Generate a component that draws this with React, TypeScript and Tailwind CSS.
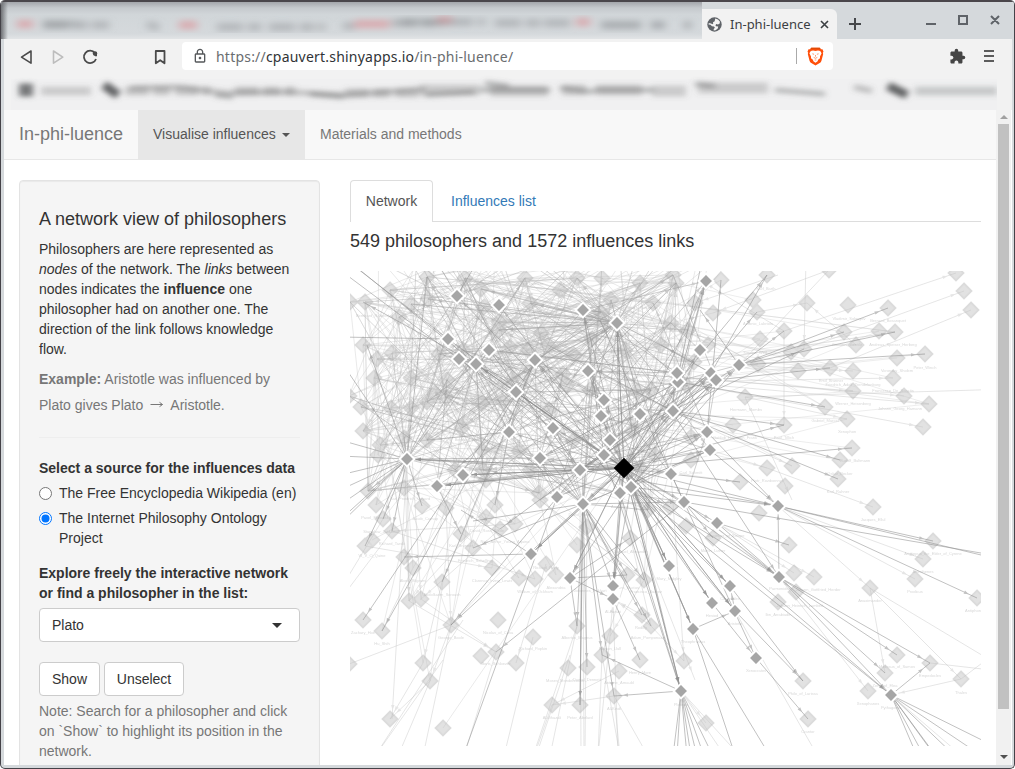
import type { ReactNode } from "react";
import { MdExtension, MdOutlineLock } from "react-icons/md";

type Pt = [number, number];
type Link = [number, number, number, number];

const PLATO: Pt = [624, 468];

const STRONG: Pt[] = [
  [457, 296], [499, 305], [448, 339], [459, 359], [489, 350], [476, 364], [516, 392], [535, 360],
  [583, 310], [617, 323], [706, 281], [588, 371], [700, 350], [678, 382], [677, 373], [711, 373],
  [716, 380], [739, 365], [604, 400], [601, 416], [640, 414], [673, 411], [553, 428], [509, 432],
  [610, 440], [604, 455], [707, 432], [710, 450], [407, 459], [540, 458], [580, 470], [671, 474],
  [463, 475], [437, 486], [557, 497], [583, 504], [620, 493], [631, 487], [684, 502], [717, 523],
  [778, 506], [531, 554], [570, 578], [613, 586], [613, 599], [669, 566], [779, 577], [730, 586],
  [712, 603], [735, 611], [693, 629], [756, 658], [681, 691], [891, 695],
];

const SPARSE: Pt[] = [
  [721, 280], [767, 275], [829, 270], [956, 273], [964, 291], [971, 310], [753, 300], [757, 312],
  [713, 313], [807, 303], [848, 305], [888, 308], [695, 303], [760, 339], [784, 331], [844, 332],
  [879, 331], [895, 332], [856, 345], [708, 345], [791, 352], [804, 349], [758, 364], [897, 358],
  [925, 354], [798, 371], [830, 368], [853, 371], [893, 378], [853, 391], [904, 396], [929, 404],
  [745, 397], [825, 407], [847, 419], [923, 427], [733, 425], [784, 425], [691, 437], [852, 448],
  [840, 460], [838, 479], [691, 460], [767, 468], [792, 466], [740, 482], [785, 486], [873, 507],
  [759, 513], [933, 541], [923, 559], [915, 579], [789, 545], [686, 526], [713, 538], [794, 573],
  [814, 577], [796, 592], [778, 602], [870, 588], [977, 598], [897, 655], [930, 663], [885, 673],
  [868, 691], [961, 679], [684, 661], [803, 681], [808, 719], [706, 723], [376, 505], [422, 506],
  [446, 508], [383, 519], [392, 531], [372, 540], [365, 546], [404, 557], [413, 568], [442, 582],
  [409, 601], [421, 599], [363, 620], [382, 631], [451, 625], [349, 664], [423, 663], [430, 681],
  [390, 719], [443, 728], [495, 505], [486, 517], [500, 529], [515, 524], [461, 534], [473, 548],
  [492, 568], [519, 578], [535, 579], [546, 564], [556, 575], [587, 527], [577, 545], [630, 538],
  [627, 575], [644, 580], [498, 620], [533, 637], [481, 656], [496, 652], [516, 663], [577, 626],
  [642, 615], [651, 626], [610, 636], [602, 655], [568, 668], [587, 667], [619, 671], [640, 660],
  [552, 705], [580, 705], [614, 696], [670, 507],
];

const DENSE: Pt[] = [
  [390, 290], [365, 302], [350, 302], [411, 304], [427, 277], [465, 278], [481, 289], [484, 307],
  [399, 317], [428, 299], [363, 345], [392, 353], [377, 359], [374, 378], [411, 378], [361, 407],
  [391, 408], [363, 431], [380, 445], [378, 455], [404, 438], [427, 440], [462, 428], [482, 403],
  [427, 402], [455, 470], [483, 470], [447, 380], [439, 354], [463, 350], [499, 330], [510, 347],
  [503, 402], [530, 303], [525, 278], [560, 290], [577, 278], [602, 278], [611, 300], [640, 283],
  [673, 275], [676, 283], [601, 312], [528, 350], [541, 333], [563, 374], [637, 392], [567, 385],
  [640, 468], [349, 396], [411, 408], [435, 393], [446, 397], [499, 322], [513, 378], [548, 345],
  [549, 410], [519, 451], [530, 470], [482, 450], [404, 488], [368, 491], [661, 345], [653, 303],
  [632, 431], [573, 441], [687, 386], [694, 362], [651, 390], [592, 339], [671, 323], [648, 510],
  [539, 493], [574, 355], [486, 480], [625, 350], [590, 390], [688, 330], [540, 500], [655, 455],
];

const ALL: Pt[] = [...SPARSE, ...DENSE];

const LABELS: [number, number, string][] = [
  [766, 290, "Karl_Barth"], [849, 320, "Vladimir_Solovyov"], [888, 322, "Bernard_Bosanquet"],
  [758, 325, "Antonio_Labriola"], [893, 346, "Andreas_Speiser_Herberg"], [847, 346, "Giovanni_Gentile"],
  [925, 369, "Peter_Winch"], [897, 372, "Voronsky_Sholem"], [831, 382, "Emil_Brunner"],
  [853, 386, "Friedrich_Adolf_Trendelenburg"], [893, 392, "Francesco_De_Sanctis"],
  [853, 405, "Werner_Heisenberg"], [900, 410, "Johann_Georg_Hamann"], [825, 422, "Gabriel_Marcel"],
  [847, 433, "Xenophon"], [784, 439, "Paul_Tillich"], [735, 439, "Gottlob_Hermann_Frank"],
  [746, 411, "Hermann_Mombs"], [855, 462, "Rudolf_Bultmann"], [840, 475, "Oskar_Becker"],
  [838, 493, "Karl_Rahner"], [767, 482, "Piotr_Rozdvennyi"], [691, 474, "Carl_Schmitt"],
  [873, 521, "Jacques_Ellul"], [933, 555, "Aristippus_the_Elder_of_Cyrene"], [923, 573, "Antisthenes"],
  [915, 593, "Prodicus"], [870, 602, "Anaximander"], [973, 612, "Antiphon"], [897, 668, "Melissus_of_Samos"],
  [930, 677, "Empedocles"], [885, 687, "Zeno_of_Elea"], [868, 705, "Xenophanes"], [891, 709, "Pythagoras"],
  [961, 694, "Thales"], [803, 695, "Philo_of_Larissa"], [808, 733, "Crantor"], [756, 672, "Xenocrates"],
  [693, 643, "Theophrastus"], [735, 625, "Aristotle"], [712, 617, "Hesiod"], [730, 600, "Carneades"],
  [778, 616, "Ibn_Arrabiade"], [780, 590, "Parmenides"], [818, 591, "Johann_Gottfried_Herder"],
  [800, 607, "Johann_Heinrich_Lambert"], [713, 552, "Martin_Luther"], [726, 537, "Diogenes_of_Sinope"],
  [669, 580, "Mary_Midgley"], [681, 706, "Plotinus"], [614, 710, "Al-Kindi"], [552, 719, "Al-Ghazali"],
  [580, 719, "Peter_Abelard"], [619, 684, "Antoine_Arnauld"], [587, 681, "Daniel_Dennett"],
  [565, 682, "Moses_Mendelssohn"], [640, 674, "Henry_More"], [610, 650, "Ramon_Llull"],
  [577, 639, "Albertus_Magnus"], [648, 639, "Adam_Pomponazzi"], [641, 629, "Rodilly"],
  [613, 613, "Al-Farabi"], [533, 650, "Richard_Popkin"], [498, 634, "Nicolas_of_Cusa"],
  [496, 665, "Boris_Schloezer"], [451, 639, "George_Boole"], [382, 645, "Hu_Shih"],
  [363, 634, "Zachary_Hoe"], [442, 596, "Abdolkarim_Soroush"], [413, 582, "Akeel_Bilgrami"],
  [372, 557, "W_V_O_Quine"], [392, 545, "Richard_Tarski"], [382, 533, "Stanisław_Jaśkowski"],
  [376, 519, "Pavel_Florensky"], [425, 520, "Jacob_Carnap"], [475, 562, "Friedrich_Schelling"],
  [492, 582, "Clarence_Irving_Lewis"], [461, 547, "Karl_Brunner"], [487, 532, "David_Ross_Wilde"],
  [535, 593, "William_of_Ockham"], [546, 569, "Richard_Rorty"], [556, 589, "Alexandria"],
  [505, 543, "Nick_Arthur_Young_Aquino"], [631, 553, "Samuel_Alexander"], [627, 589, "Duns_Scotus"],
  [646, 593, "Francisco_Suarez"], [590, 592, "Johannes_Eckhart"],
  [374, 317, "Bernhard_Radovsky"], [425, 400, "Ludwig_Wienerbach"], [410, 500, "Karl_Friedrich_Guyard"],
  [530, 285, "Gilles_Deleuze"], [640, 309, "Friedrich_Nietzsche"], [615, 337, "Immanuel_Kant"],
  [520, 295, "Henri_Bergson"], [480, 320, "Max_Horkheimer"], [620, 508, "Augustine"], [580, 516, "David_Hume"],
  [400, 422, "Rudolf_Carnap"], [470, 441, "Bertrand_Russell"], [560, 443, "John_Locke"], [755, 354, "Simone_Weil"],
];

const STRONG_LINKS: Link[] = [
  [516, 392, 363, 620], [535, 360, 382, 631], [535, 360, 442, 582], [580, 470, 451, 625], [583, 504, 451, 625],
  [684, 502, 496, 652], [531, 554, 404, 557], [557, 497, 466, 748], [583, 504, 580, 705], [583, 470, 580, 705],
  [583, 504, 587, 667], [583, 504, 577, 626], [583, 504, 602, 655], [583, 504, 614, 696], [570, 578, 577, 626],
  [681, 691, 614, 696], [681, 691, 602, 655], [624, 468, 681, 691], [631, 487, 681, 691], [620, 493, 681, 691],
  [604, 455, 681, 691], [624, 468, 693, 629], [631, 487, 693, 629], [624, 468, 669, 566], [631, 487, 669, 566],
  [624, 468, 712, 603], [631, 487, 712, 603], [624, 468, 735, 611], [631, 487, 735, 611], [624, 468, 730, 586],
  [631, 487, 730, 586], [684, 502, 756, 658], [712, 603, 756, 658], [624, 468, 779, 577], [631, 487, 779, 577],
  [684, 502, 779, 577], [717, 523, 779, 577], [710, 450, 778, 506], [707, 432, 778, 506], [624, 468, 891, 695],
  [631, 487, 891, 695], [779, 577, 778, 506], [624, 468, 778, 506], [631, 487, 778, 506], [580, 470, 778, 506],
  [778, 506, 933, 541], [778, 506, 1010, 562], [778, 506, 977, 598], [684, 502, 1010, 558],
  [779, 577, 891, 695], [779, 577, 897, 655], [779, 577, 930, 663], [779, 577, 885, 673], [671, 410, 779, 577],
  [891, 695, 930, 663], [891, 695, 1000, 749], [891, 695, 982, 756], [891, 695, 955, 756], [891, 695, 936, 756],
  [891, 695, 938, 760], [891, 695, 924, 756], [891, 695, 917, 756], [735, 611, 803, 681], [730, 586, 803, 681],
  [756, 658, 808, 719], [693, 629, 770, 756], [693, 629, 734, 752], [693, 629, 735, 611], [735, 611, 730, 586],
  [681, 691, 673, 756], [681, 691, 677, 756], [681, 691, 687, 756], [681, 691, 691, 756], [681, 691, 697, 756],
  [681, 691, 704, 756], [681, 691, 713, 756], [739, 365, 888, 308], [739, 365, 844, 332], [739, 365, 895, 332],
  [739, 365, 925, 354], [624, 468, 852, 448], [671, 411, 840, 460], [671, 411, 838, 479], [716, 380, 830, 368],
  [624, 468, 784, 425], [671, 411, 784, 425], [678, 382, 825, 407],
  [678, 382, 767, 275], [711, 373, 767, 275], [739, 365, 784, 331], [624, 468, 757, 312], [671, 411, 804, 349],
  [707, 432, 721, 280], [739, 365, 700, 310], [583, 504, 531, 554],
  [624, 468, 531, 554], [631, 487, 570, 578], [624, 468, 570, 578], [631, 487, 613, 586], [620, 493, 613, 586],
  [583, 504, 613, 586], [583, 504, 651, 626], [583, 504, 642, 615], [583, 504, 644, 580], [583, 504, 627, 575],
  [570, 578, 627, 575], [570, 578, 630, 538], [570, 578, 613, 599], [613, 599, 640, 660], [531, 554, 461, 510],
  [437, 486, 461, 534], [407, 459, 365, 546], [407, 459, 392, 531], [407, 459, 383, 519], [407, 459, 422, 506],
  [407, 459, 340, 520], [407, 459, 340, 524], [407, 459, 340, 505], [407, 459, 340, 490], [407, 459, 340, 475],
  [407, 459, 340, 456], [407, 459, 340, 440], [407, 459, 340, 360], [407, 459, 367, 345], [407, 459, 427, 277],
  [624, 468, 407, 459], [580, 470, 407, 459], [540, 458, 407, 459], [624, 468, 463, 475], [580, 470, 463, 475],
  [624, 468, 437, 486], [580, 470, 437, 486], [448, 339, 340, 255], [459, 359, 340, 270],
  [476, 364, 350, 262], [476, 364, 363, 302], [457, 296, 490, 240], [457, 296, 430, 250], [448, 339, 340, 337],
  [624, 468, 617, 323], [604, 455, 583, 310], [617, 323, 620, 493], [671, 411, 700, 270], [684, 502, 600, 320],
  [580, 470, 500, 529], [583, 504, 473, 548], [583, 504, 473, 521], [509, 432, 495, 505],
  [631, 487, 670, 507], [671, 474, 740, 482], [717, 523, 789, 545], [684, 502, 713, 538], [583, 504, 684, 502],
  [624, 468, 476, 364], [631, 487, 459, 359], [620, 493, 535, 360], [604, 455, 476, 364], [610, 440, 535, 360],
  [631, 487, 716, 380], [620, 493, 711, 373], [631, 487, 739, 365], [580, 470, 739, 365], [583, 504, 716, 380],
  [631, 487, 678, 382], [620, 493, 707, 432], [583, 504, 710, 450], [580, 470, 707, 432], [580, 470, 673, 411],
];

const WEAK_LINKS: Link[] = [
  [806, 260, 804, 349], [739, 365, 829, 270], [784, 331, 956, 273], [804, 349, 964, 291], [830, 368, 971, 310],
  [745, 397, 1010, 389], [678, 382, 923, 427], [678, 382, 929, 404], [716, 380, 904, 396], [678, 382, 893, 378],
  [757, 312, 807, 303], [856, 345, 807, 303], [745, 397, 847, 419], [745, 397, 792, 500], [671, 411, 792, 466],
  [710, 450, 767, 468], [767, 468, 873, 507], [717, 380, 853, 391], [739, 365, 853, 371], [784, 331, 784, 425],
  [778, 506, 870, 588], [778, 506, 915, 579], [870, 588, 885, 673], [870, 588, 990, 660],
  [870, 588, 961, 679], [930, 663, 1000, 671], [961, 679, 891, 695], [961, 679, 990, 657], [779, 577, 868, 691],
  [778, 506, 923, 559], [735, 611, 820, 760], [717, 523, 814, 577], [717, 523, 794, 573], [684, 502, 796, 592],
  [671, 474, 684, 661], [891, 695, 962, 756], [681, 691, 706, 723], [681, 691, 725, 756], [681, 691, 740, 756],
  [451, 625, 349, 664], [451, 625, 423, 756], [451, 625, 430, 681], [421, 599, 496, 652], [409, 601, 496, 652],
  [423, 663, 390, 719], [430, 681, 390, 719], [443, 660, 375, 756], [463, 620, 375, 756], [430, 681, 398, 756],
  [496, 652, 464, 756], [533, 637, 504, 756], [577, 626, 550, 756], [577, 626, 533, 756], [580, 500, 581, 756],
  [583, 504, 584, 756], [587, 527, 585, 756], [407, 459, 409, 601], [404, 440, 409, 601], [411, 440, 421, 599],
  [407, 459, 392, 719], [446, 508, 451, 625], [365, 546, 492, 568], [392, 531, 535, 579],
  [610, 636, 598, 756], [602, 655, 620, 756], [614, 696, 620, 756], [614, 696, 648, 756], [614, 696, 552, 705],
  [619, 671, 552, 705], [552, 705, 534, 756], [570, 655, 536, 756], [610, 636, 613, 599], [644, 580, 610, 636],
  [627, 575, 602, 655], [642, 615, 613, 599], [651, 626, 613, 599], [651, 626, 684, 661], [640, 540, 695, 680],
  [620, 493, 651, 626], [613, 599, 618, 756], [602, 655, 598, 756], [500, 529, 420, 600], [515, 524, 392, 531],
  [486, 517, 409, 601], [413, 568, 382, 631], [392, 531, 340, 600], [383, 519, 340, 590], [442, 582, 423, 663],
  [546, 564, 516, 663], [778, 275, 695, 303], [829, 270, 713, 313], [784, 331, 700, 280], [758, 364, 688, 330],
];

function seeded(seed: number) {
  let s = seed;
  return () => {
    s = (s * 1664525 + 1013904223) % 4294967296;
    return s / 4294967296;
  };
}

const rnd = seeded(77);
const pick = (list: Pt[]): Pt => list[Math.floor(rnd() * list.length)];
const link = (a: Pt, b: Pt): Link => [a[0], a[1], b[0], b[1]];
const near = (from: Pt, list: Pt[], reach: number): Pt => {
  for (let i = 0; i < 8; i++) {
    const p = pick(list);
    if (p !== from && Math.hypot(p[0] - from[0], p[1] - from[1]) < reach) return p;
  }
  return pick(list);
};

const HUBS: Pt[] = [
  [617, 323], [617, 323], [617, 323], [617, 323], [407, 459], [407, 459], [457, 296], [476, 364], [580, 470],
  [583, 504], [509, 432], [444, 394], [535, 360], [673, 411],
];

const hazeLinks = Array.from({ length: 520 }, () => {
  const a = pick(DENSE);
  return link(a, rnd() < 0.88 ? near(a, DENSE, 190) : [350 + rnd() * 390, 250]);
});
const lowLinks = Array.from({ length: 50 }, () => {
  const a = pick(SPARSE.slice(70, 106));
  return link(near(a, DENSE, 150), a);
});
const rightLinks = Array.from({ length: 45 }, () => {
  const a = pick(SPARSE.slice(0, 47));
  return link(near(a, DENSE, 110), near(a, SPARSE.slice(0, 47), 90));
});
const hubLinks = Array.from({ length: 150 }, () => {
  const a = pick(HUBS);
  return link(a, rnd() < 0.8 ? near(a, DENSE, 260) : [340 + rnd() * 420, 250]);
});
const platoLinks = STRONG.filter((p) => p[0] < 745).map((p) => link(PLATO, p));
const crossLinks = Array.from({ length: 115 }, () => {
  const a = pick(STRONG.slice(3, 39));
  return link(a, rnd() < 0.6 ? near(a, STRONG.slice(3, 39), 190) : near(a, DENSE, 150));
});

function Links({ items, color, opacity, arrows }: { items: Link[]; color: string; opacity: number; arrows: boolean }) {
  return (
    <g stroke={color} fill={color}>
      {items.map(([x1, y1, x2, y2], i) => {
        const d = Math.hypot(x2 - x1, y2 - y1);
        if (d < 4) return null;
        const inside = x2 > 350 && x2 < 981 && y2 > 271 && y2 < 746;
        const ux = (x2 - x1) / d;
        const uy = (y2 - y1) / d;
        const tx = x2 - ux * 9;
        const ty = y2 - uy * 9;
        const bx = tx - ux * 5;
        const by = ty - uy * 5;
        return (
          <g key={i} opacity={opacity}>
            <line x1={x1} y1={y1} x2={x2} y2={y2} strokeWidth={1} />
            {arrows && inside && d > 25 && (
              <path stroke="none" d={`M${tx} ${ty}L${bx - uy * 1.7} ${by + ux * 1.7}L${bx + uy * 1.7} ${by - ux * 1.7}Z`} />
            )}
          </g>
        );
      })}
    </g>
  );
}

const diamond = ([x, y]: Pt, r: number) => `M${x} ${y - r}L${x + r} ${y}L${x} ${y + r}L${x - r} ${y}Z`;

function Network() {
  return (
    <svg className="block h-[475px] w-[631px]" viewBox="350 271 631 475">
      <Links items={hazeLinks} color="#c4c4c4" opacity={0.36} arrows={false} />
      <Links items={lowLinks} color="#c8c8c8" opacity={0.38} arrows={false} />
      <Links items={rightLinks} color="#c8c8c8" opacity={0.32} arrows={false} />
      <Links items={WEAK_LINKS} color="#c0c0c0" opacity={0.4} arrows />
      <g fill="#c6c6c6" stroke="#b8b8b8" strokeWidth={1.8} opacity={0.5}>
        {ALL.map((p, i) => <path key={i} d={diamond(p, 7.5)} />)}
      </g>
      <g fill="#b0b0b0" fontSize={4} textAnchor="middle" opacity={0.5} className="font-['Liberation_Sans',sans-serif]">
        {LABELS.map(([x, y, t]) => <text key={t + x} x={x} y={y}>{t}</text>)}
      </g>
      <Links items={hubLinks} color="#a8a8a8" opacity={0.42} arrows />
      <Links items={crossLinks} color="#9c9c9c" opacity={0.48} arrows />
      <Links items={platoLinks} color="#909090" opacity={0.55} arrows />
      <Links items={STRONG_LINKS} color="#8e8e8e" opacity={0.54} arrows />
      <g fill="#a6a6a6" stroke="#fff" strokeWidth={2}>
        {STRONG.map((p, i) => <path key={i} d={diamond(p, 7.4)} />)}
      </g>
      <path d={diamond(PLATO, 10.3)} fill="#000" />
    </svg>
  );
}

function TabSmudge() {
  return (
    <svg className="block h-[37px] w-[701px]" viewBox="0 2 701 37">
      <defs>
        <filter id="soft" x="-10%" y="-60%" width="120%" height="220%"><feGaussianBlur stdDeviation="4 3.2" /></filter>
        <linearGradient id="fade" x1="0" y1="0" x2="0" y2="1">
          <stop offset="0" stopColor="#a4a6ab" /><stop offset=".16" stopColor="#c5c9cd" />
          <stop offset=".34" stopColor="#d1d6d9" /><stop offset=".86" stopColor="#d5d9dc" /><stop offset="1" stopColor="#e2e4e6" />
        </linearGradient>
        <linearGradient id="edge"><stop offset="0" stopColor="#707276" /><stop offset="1" stopColor="#707276" stopOpacity="0" /></linearGradient>
      </defs>
      <rect y="2" width="701" height="37" fill="url(#fade)" />
      <rect y="2" width="7" height="37" fill="url(#edge)" />
      <g filter="url(#soft)" fill="none" strokeWidth="8">
        <path stroke="#db9298" d="M16 24h16M178 25h18M354 24h34M436 20h15M575 22h14" opacity=".65" />
        <path stroke="#8e9194" d="M42 25h66M146 24l12 4M216 27h44M268 27h56M342 26h12M390 23h54M446 22h38M494 23h76" opacity=".45" strokeDasharray="26 5 14 4" />
        <path stroke="#7c7f82" d="M42 24h34M400 22h42" opacity=".3" />
        <path stroke="#8e9194" d="M600 25h40M650 25h14M683 25h7" opacity=".6" />
      </g>
    </svg>
  );
}

function BookmarkSmudge() {
  return (
    <svg className="block h-[37px] w-[986px]" viewBox="11 73 986 37">
      <defs><filter id="mist" x="-2%" y="-80%" width="104%" height="260%"><feGaussianBlur stdDeviation="3.4 2.8" /></filter></defs>
      <rect x="11" y="73" width="986" height="37" fill="#f0f0f1" />
      <rect x="11" y="73" width="986" height="6" fill="#f2f2f2" />
      <g filter="url(#mist)" fill="none" stroke="#626365">
        <path strokeWidth="13" d="M19 90h14" opacity=".85" />
        <path strokeWidth="9" d="M41 91h50" opacity=".26" />
        <path strokeWidth="9" d="M104 85l14 10" />
        <path strokeWidth="9" d="M125 91h85M235 91h60M345 93h75" opacity=".3" strokeDasharray="24 4 17 5" />
        <path strokeWidth="6" d="M130 88l50-1l45 6l62-1l58 3l80-6" opacity=".32" />
        <path strokeWidth="5" d="M215 95l18 2M310 94l34 3M425 95l50-3M485 83l24 3M480 90h70M560 88l34 4M594 90h60M695 84l20 2M775 90l50 4" opacity=".42" />
        <path strokeWidth="11" d="M420 90h60M490 91h58M562 90h24M596 90h46M652 91h34M698 88h70" opacity=".27" />
        <path strokeWidth="6" d="M854 87l18 4" opacity=".35" />
        <path strokeWidth="9" d="M888 86l19 9" />
        <path strokeWidth="9" d="M915 91h82" opacity=".28" />
      </g>
    </svg>
  );
}

function GlobeIcon() {
  return (
    <svg className="size-[15px] shrink-0" viewBox="0 0 15 15">
      <circle cx="7.500" cy="7.500" r="7.200" fill="#5f6368" />
      <path fill="#f2f2f2" d="M8.200 1.600 11 2.500l2 2.300-.5 2-1.600.6-1.700-.5-.7 1.300.5 1 2.200.4-.4 1.800-2.200 1.800-1.900.3V12l1.200-1.300-.9-1.300-2-.2-1.600-1.400-1.900-.4.3-1.400 2.300.6 1.200.7.9-.6-.2-1.400 1.700-1z" />
    </svg>
  );
}

function BraveIcon() {
  return (
    <svg className="h-[19px] w-[17px]" viewBox="0 0 17 19">
      <path fill="#ff4f0a" d="M4.2 .8h8.600l1 1.500 1.700-.1 1 2.500-.7 1.100.4 1.200-1.800 7.100-.9 1.400-5 2.900-5-2.900-.9-1.400L.8 7l.4-1.200L.5 4.700l1-2.500 1.700.1z" />
      <path fill="#e04a06" d="M4.2 .8h8.600l1 1.500H3.200z" />
      <path fill="#fff" d="M3.800 3.900 6 3.600l2.500.3 2.500-.3 2.200.3 1.400 2.300-1.600 3.200v1.900l-1.900 1.400-.5 1.600-2.100 1.500-2.100-1.500-.5-1.600-1.900-1.400V9.400L2.400 6.200z" />
      <path fill="none" stroke="#ff6a2e" strokeWidth=".7" d="m5.400 6.800 1.700.5M11.600 6.800l-1.700.5M8.500 8v1.700M6.700 10.400l1.800.9 1.800-.9M7.700 13h1.600" />
    </svg>
  );
}

function TitleBar() {
  return (
    <header className="flex h-[39px] shrink-0 border-t-2 border-[#4a464b] bg-[#d5d9dc]">
      <TabSmudge />
      <div className="mt-[7px] flex h-[30px] w-[135px] items-center rounded-tr-md bg-[#f2f2f2] pl-[5px] font-['Noto_Sans',sans-serif] text-[13px] text-[#3c4043]">
        <GlobeIcon />
        <span className="ml-[8px] w-[80px] whitespace-nowrap">In-phi-luence</span>
        <svg className="ml-[10px] size-[9px] shrink-0" viewBox="0 0 9 9"><path d="m1 1 7 7m0-7L1 8" stroke="#3c4043" strokeWidth="1.6" /></svg>
      </div>
      <svg className="h-[37px] w-[176px]" viewBox="837 2 176 37" fill="none" stroke="#45474a">
        <path strokeWidth="2" d="M849 24h12M855 18v12" />
        <path strokeWidth="2" stroke="#5f6368" d="M926 24h10M959 16h8v8h-8zM991 16l8 8m0-8-8 8" />
      </svg>
    </header>
  );
}

function Toolbar() {
  return (
    <div className="flex h-[34px] shrink-0 items-center bg-[#f2f2f2]">
      <svg className="h-[34px] w-[178px]" viewBox="4 39 178 34" fill="none" stroke="#4a4a4a" strokeWidth="1.6" strokeLinejoin="round">
        <path d="M31 51v12.200l-9.500-6.100z" />
        <path d="M53.500 51v12.200l9.300-6.100z" stroke="#bdbdbd" />
        <path d="M95 53a6.200 6.200 0 1 0 1 6" strokeWidth="1.8" />
        <path d="M92.500 52.200h4.500v4h-2z" fill="#4a4a4a" stroke="none" />
        <circle cx="95" cy="53.500" r="2.200" fill="#4a4a4a" stroke="none" />
        <path d="M155.800 51h8.700v12.300l-4.300-3.100-4.400 3.100z" strokeWidth="1.8" />
      </svg>
      <div className="flex h-7 w-[651px] items-center rounded-[4px] bg-white pr-[9px] pl-[10px]">
        <MdOutlineLock className="size-[16px] text-[#55585b]" />
        <span className="mt-px ml-[8px] font-['Noto_Sans',sans-serif] text-[14px] tracking-[0.21px] text-[#6a6d70]">
          https://<span className="text-[#303336]">cpauvert.shinyapps.io</span>/in-phi-luence/
        </span>
        <span className="mr-[10px] ml-auto h-4 w-px bg-[#aaa]" />
        <BraveIcon />
      </div>
      <div className="ml-auto flex items-center gap-[18px] pr-[18px]">
        <MdExtension className="size-[17px] text-[#454545]" />
        <svg className="h-[12px] w-[10px]" viewBox="0 0 10 12"><path d="M0 1h10M0 6h10M0 11h10" stroke="#5c5c5c" strokeWidth="2" /></svg>
      </div>
    </div>
  );
}

function Navbar() {
  return (
    <nav className="flex h-[50px] border-b border-[#e7e7e7] bg-[#f8f8f8] text-[#777]">
      <span className="w-[134px] pl-[15px] text-[18px] leading-[48px]">In-phi-luence</span>
      <span className="flex w-[167px] items-center bg-[#e7e7e7] pb-px pl-[15px] text-[#555]">
        Visualise influences
        <i className="mt-[2px] ml-[6px] border-x-4 border-t-4 border-x-transparent border-t-[#555]" />
      </span>
      <span className="pl-[15px] leading-[49px]">Materials and methods</span>
    </nav>
  );
}

function Radio({ on, children }: { on?: boolean; children: ReactNode }) {
  return (
    <label className="flex">
      <svg className="mt-[4px] mr-[7px] size-[13px] shrink-0" viewBox="0 0 13 13">
        <circle cx="6.500" cy="6.500" r="6" fill="#fff" stroke={on ? "#0075ff" : "#767676"} />
        {on && <circle cx="6.500" cy="6.500" r="4" fill="#0075ff" />}
      </svg>
      <span>{children}</span>
    </label>
  );
}

function Sidebar() {
  return (
    <aside className="h-[700px] w-[301px] shrink-0 rounded-[4px] border border-[#e3e3e3] bg-[#f5f5f5] px-[19px] pt-[28px] shadow-[inset_0_1px_1px_rgba(0,0,0,0.05)]">
      <h4 className="text-[18px] leading-[20px]">A network view of philosophers</h4>
      <p className="mt-[10px]">
        Philosophers are here represented as <em>nodes</em> of the network. The <em>links</em> between nodes indicates the{" "}
        <strong>influence</strong> one philosopher had on another one. The direction of the link follows knowledge flow.
      </p>
      <div className="mt-[10px] text-[#777]">
        <p className="h-[26px]"><strong>Example:</strong> Aristotle was influenced by</p>
        <p className="flex h-5">
          Plato gives Plato
          <svg className="mx-[7px] mt-[5px] h-[10px] w-[13px]" viewBox="0 0 13 10" fill="none" stroke="#777"><path d="M.5 4.500h12M9.500 2.300l3 2.200-3 2.200" /></svg>
          Aristotle.
        </p>
      </div>
      <hr className="mt-[22px] mb-5 border-t border-[#eee]" />
      <div className="font-bold">Select a source for the influences data</div>
      <div className="mt-[5px] flex flex-col gap-[5px]">
        <Radio>The Free Encyclopedia Wikipedia (en)</Radio>
        <Radio on>The Internet Philosophy Ontology Project</Radio>
      </div>
      <div className="mt-[15px] font-bold">Explore freely the interactive network or find a philosopher in the list:</div>
      <div className="mt-[5px] flex h-[34px] items-center justify-between rounded-[4px] border border-[#ccc] bg-white pr-[17px] pl-3">
        Plato
        <i className="border-x-[5px] border-t-[5px] border-x-transparent border-t-[#333]" />
      </div>
      <div className="mt-5 flex gap-1">
        <button className="h-[34px] w-[61px] rounded-[4px] border border-[#ccc] bg-white">Show</button>
        <button className="h-[34px] w-[80px] rounded-[4px] border border-[#ccc] bg-white">Unselect</button>
      </div>
      <p className="mt-[5px] text-[#777]">Note: Search for a philosopher and click on `Show` to highlight its position in the network.</p>
    </aside>
  );
}

function MainPanel() {
  return (
    <main className="w-[631px] shrink-0">
      <div className="flex h-[42px]">
        <span className="w-[83px] rounded-t-[4px] border border-b-0 border-[#ddd] text-center leading-[40px] text-[#555]">Network</span>
        <span className="flex-1 border-b border-[#ddd] pl-[18px] leading-[42px] text-[#337ab7]">Influences list</span>
      </div>
      <h4 className="mt-[9px] mb-[20px] text-[18px] leading-[20px]">549 philosophers and 1572 influences links</h4>
      <Network />
    </main>
  );
}

function ScrollBar() {
  return (
    <div className="flex w-[15px] shrink-0 flex-col items-center bg-[#f1f1f1]">
      <i className="mt-[5px] border-x-[4px] border-b-[4px] border-x-transparent border-b-[#a0a0a0]" />
      <div className="mt-[5px] h-[585px] w-[11px] bg-[#c1c1c1]" />
      <i className="mt-auto mb-[6px] border-x-[4px] border-t-[4px] border-x-transparent border-t-[#505050]" />
    </div>
  );
}

export default function App() {
  return (
    <div className="h-[769px] w-[1015px] bg-white font-['Liberation_Sans',Arial,sans-serif] text-[14px] leading-5 text-[#333]">
      <div className="flex h-full flex-col overflow-hidden rounded-[5px] border-x border-b border-[#444248] bg-[#d5d9dc]">
        <TitleBar />
        <div className="mr-[2px] mb-[3px] ml-[3px] flex min-h-0 flex-1 flex-col bg-[#f2f2f2]">
          <Toolbar />
          <div className="h-[37px] shrink-0 pl-[7px]"><BookmarkSmudge /></div>
          <div className="flex min-h-0 flex-1 bg-white">
            <div className="w-[992px] shrink-0 overflow-hidden">
              <Navbar />
              <div className="flex gap-[30px] pt-[20px] pl-[15px]">
                <Sidebar />
                <MainPanel />
              </div>
            </div>
            <ScrollBar />
          </div>
        </div>
      </div>
    </div>
  );
}
